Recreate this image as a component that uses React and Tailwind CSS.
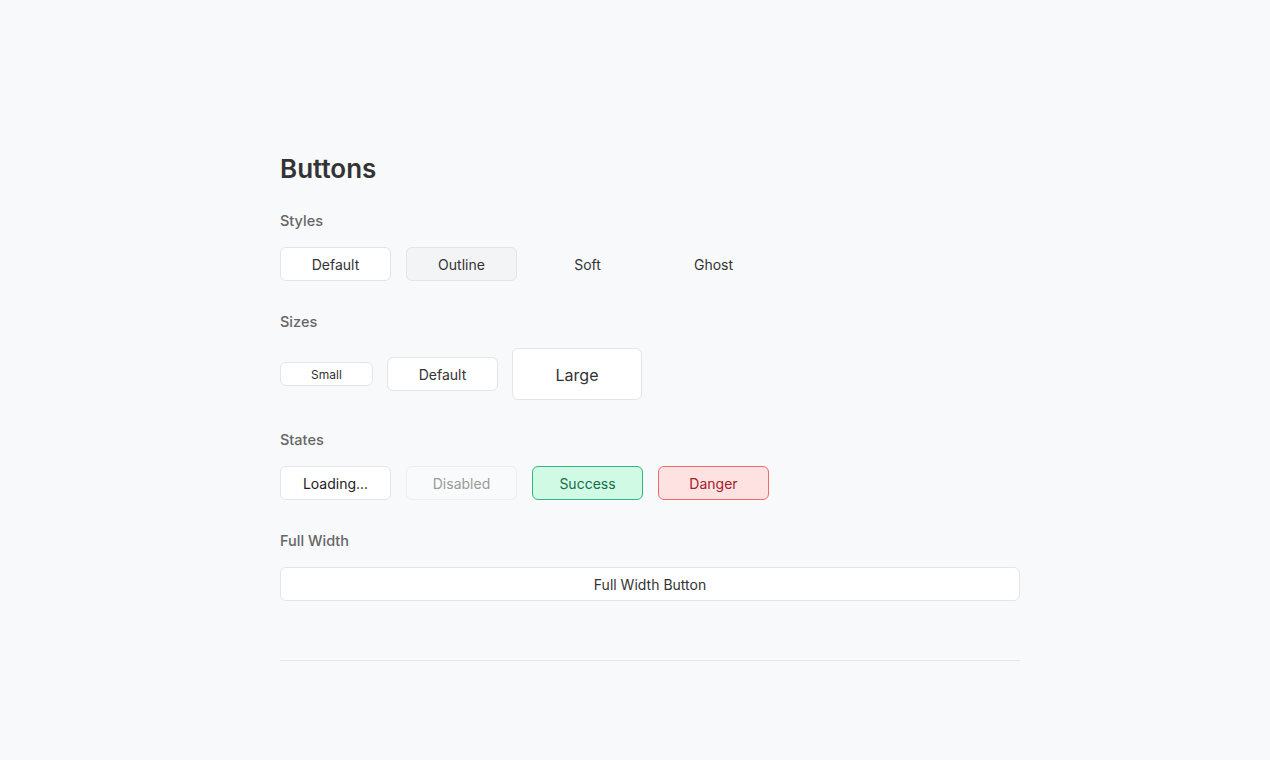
const styleButtons = [
  { label: 'Default', cls: 'bg-white border-[#e3e5e8] text-[#333]' },
  { label: 'Outline', cls: 'bg-[#f3f4f6] border-[#e3e5e8] text-[#333]' },
  { label: 'Soft', cls: 'bg-transparent border-transparent text-[#333]' },
  { label: 'Ghost', cls: 'bg-transparent border-transparent text-[#333]' },
];

const stateButtons = [
  { label: 'Loading...', cls: 'bg-white border-[#e3e5e8] text-[#222]' },
  { label: 'Disabled', cls: 'bg-[#f9fafb] border-[#eceef0] text-[#9a9a9a]' },
  { label: 'Success', cls: 'bg-[#d1fae5] border-[#34b383] text-[#146c4a]' },
  { label: 'Danger', cls: 'bg-[#fee2e2] border-[#ef6b6b] text-[#a3202a]' },
];

function Label({ children }) {
  return <p className="mb-4 pt-px text-[14.5px] font-medium leading-5 text-[#666]">{children}</p>;
}

export default function App() {
  return (
    <div
      className="min-h-screen bg-[#f8f9fa] pt-[153px]"
      style={{ fontFamily: 'Inter, "Noto Sans", sans-serif' }}
    >
      <div className="mx-auto w-[770px] pl-[30px]">
        <h1 className="mb-[25px] text-[26px] font-semibold leading-8 text-[#333]">Buttons</h1>

        <section className="mb-[30px]">
          <Label>Styles</Label>
          <div className="flex gap-[15px]">
            {styleButtons.map((b) => (
              <button
                key={b.label}
                className={`h-[34px] w-[111px] rounded-md border pt-px text-sm ${b.cls}`}
              >
                {b.label}
              </button>
            ))}
          </div>
        </section>

        <section className="mb-[29px]">
          <Label>Sizes</Label>
          <div className="flex items-center gap-[14px]">
            <button className="h-[24px] w-[93px] rounded-md border border-[#e3e5e8] bg-white pt-px text-xs text-[#333]">
              Small
            </button>
            <button className="h-[34px] w-[111px] rounded-md border border-[#e3e5e8] bg-white pt-px text-sm text-[#333]">
              Default
            </button>
            <button className="h-[52px] w-[130px] rounded-md border border-[#e3e5e8] bg-white pt-px text-base text-[#333]">
              Large
            </button>
          </div>
        </section>

        <section className="mb-[30px]">
          <Label>States</Label>
          <div className="flex gap-[15px]">
            {stateButtons.map((b) => (
              <button
                key={b.label}
                className={`h-[34px] w-[111px] rounded-md border pt-px text-sm ${b.cls}`}
              >
                {b.label}
              </button>
            ))}
          </div>
        </section>

        <section>
          <Label>Full Width</Label>
          <button className="h-[34px] w-full rounded-md border border-[#e3e5e8] bg-white pt-px text-sm text-[#333]">
            Full Width Button
          </button>
        </section>

        <div className="mt-[59px] border-t border-[#e5e7eb]" />
      </div>
    </div>
  );
}
